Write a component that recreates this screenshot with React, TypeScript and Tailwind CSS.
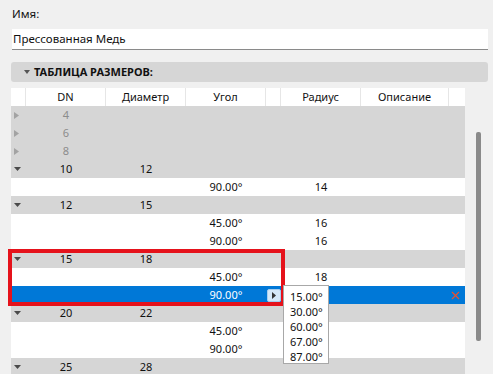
import { X } from 'lucide-react'

type Row =
  | { kind: 'collapsed'; dn: string }
  | { kind: 'group'; dn: string; dia: string }
  | { kind: 'item'; angle: string; radius?: string; selected?: boolean }

const rows: Row[] = [
  { kind: 'collapsed', dn: '4' },
  { kind: 'collapsed', dn: '6' },
  { kind: 'collapsed', dn: '8' },
  { kind: 'group', dn: '10', dia: '12' },
  { kind: 'item', angle: '90.00°', radius: '14' },
  { kind: 'group', dn: '12', dia: '15' },
  { kind: 'item', angle: '45.00°', radius: '16' },
  { kind: 'item', angle: '90.00°', radius: '16' },
  { kind: 'group', dn: '15', dia: '18' },
  { kind: 'item', angle: '45.00°', radius: '18' },
  { kind: 'item', angle: '90.00°', selected: true },
  { kind: 'group', dn: '20', dia: '22' },
  { kind: 'item', angle: '45.00°' },
  { kind: 'item', angle: '90.00°' },
  { kind: 'group', dn: '25', dia: '28' },
]

const cols = 'grid grid-cols-[15px_80px_80px_80px_15px_80px_88px_16px]'

function ArrowRight() {
  return (
    <svg width="5" height="7" viewBox="0 0 5 7" className="ml-[3px]">
      <path d="M0 0 L5 3.5 L0 7 Z" fill="#a3a3a3" />
    </svg>
  )
}

function ArrowDown({ color = '#4a4a4a' }: { color?: string }) {
  return (
    <svg width="7" height="4" viewBox="0 0 7 4" className="ml-[3px]">
      <path d="M0 0 L7 0 L3.5 4 Z" fill={color} />
    </svg>
  )
}

function TableRow({ row }: { row: Row }) {
  if (row.kind === 'collapsed') {
    return (
      <div className={`${cols} h-[18px] items-center bg-[#d6d6d6]`}>
        <ArrowRight />
        <div className="text-center text-[#8c8c8c]">{row.dn}</div>
      </div>
    )
  }
  if (row.kind === 'group') {
    return (
      <div className={`${cols} h-[18px] items-center bg-[#d6d6d6]`}>
        <ArrowDown />
        <div className="text-center">{row.dn}</div>
        <div className="text-center">{row.dia}</div>
      </div>
    )
  }
  return (
    <div
      className={`${cols} h-[18px] items-center ${
        row.selected ? 'bg-[#0078d7] text-white' : 'bg-white'
      }`}
    >
      <div />
      <div />
      <div />
      <div className="text-center">{row.angle}</div>
      <div className="flex h-full items-center justify-end">
        {row.selected && (
          <div className="flex h-[13px] w-[14px] items-center justify-center rounded-[2px] border border-[#a6cdee] bg-[#d5e8f8]">
            <svg width="4" height="7" viewBox="0 0 4 7">
              <path d="M0 0 L4 3.5 L0 7 Z" fill="#333" />
            </svg>
          </div>
        )}
      </div>
      <div className="text-center">{row.radius}</div>
      <div />
      <div className="flex items-center">
        {row.selected && <X size={13} strokeWidth={2} className="text-[#f0502a]" />}
      </div>
    </div>
  )
}

export default function App() {
  return (
    <div
      className="relative h-[374px] w-[493px] overflow-hidden bg-[#f0f0f0] text-[11px] text-[#111]"
      style={{ fontFamily: '"Noto Sans", "Segoe UI", sans-serif' }}
    >
      <div className="px-[12px] pt-[5px] text-[11.5px] leading-[18px]">Имя:</div>

      <div className="mx-[12px] mt-[6px] flex h-[21px] w-[476px] items-center border-b border-[#8a8a8a] bg-white px-[1px] text-[11.5px]">
        Прессованная Медь
      </div>

      <div className="ml-[11px] mt-[12px] flex h-[20px] w-[477px] items-center gap-[4px] rounded-[3px] bg-[#d6d6d6] pl-[13px] text-[11px] font-bold">
        <svg width="6" height="4" viewBox="0 0 6 4">
          <path d="M0 0 L6 0 L3 4 Z" fill="#555" />
        </svg>
        <span>ТАБЛИЦА РАЗМЕРОВ:</span>
      </div>

      <div className="ml-[11px] mt-[6px] flex">
        <div className="w-[454px]">
          <div className={`${cols} h-[18px] items-center bg-white`}>
            {['', 'DN', 'Диаметр', 'Угол', '', 'Радиус', 'Описание', ''].map((h, i) => (
              <div
                key={i}
                className={`flex h-full items-center justify-center ${
                  i < 7 ? 'border-r border-[#e6e6e6]' : ''
                }`}
              >
                {h}
              </div>
            ))}
          </div>
          {rows.map((r, i) => (
            <TableRow key={i} row={r} />
          ))}
        </div>
        <div className="ml-[11px] mt-[44px] h-[209px] w-[5px] rounded-[2px] bg-[#8a8a8a]" />
      </div>

      {/* selection highlight */}
      <div className="absolute left-[8px] top-[249px] h-[57px] w-[277px] border-[4px] border-[#e5121b]" />

      {/* angle dropdown */}
      <div className="absolute left-[283px] top-[285px] h-[79px] w-[46px] border border-[#a8a8a8] bg-white pl-[6px] pt-[3px] text-[11px] leading-[15px] text-[#111]">
        <div>15.00°</div>
        <div>30.00°</div>
        <div>60.00°</div>
        <div>67.00°</div>
        <div>87.00°</div>
      </div>
    </div>
  )
}
